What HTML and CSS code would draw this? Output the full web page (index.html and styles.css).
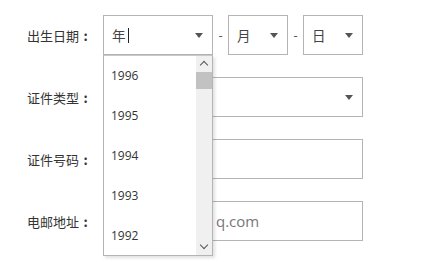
FILE: index.html
```html
<!DOCTYPE html>
<html lang="zh">
<head>
<meta charset="utf-8">
<link rel="stylesheet" href="styles.css">
</head>
<body>
<form class="form">
  <div class="row">
    <label class="label">出生日期<span class="colon">:</span></label>
    <div class="date">
      <div class="select year">
        <span class="value">年<span class="caret"></span></span>
        <span class="arrow"></span>
        <div class="dropdown">
          <ul class="options">
            <li>1996</li>
            <li>1995</li>
            <li>1994</li>
            <li>1993</li>
            <li>1992</li>
          </ul>
          <div class="scrollbar">
            <span class="chev up"></span>
            <span class="thumb"></span>
            <span class="chev down"></span>
          </div>
        </div>
      </div>
      <span class="dash">-</span>
      <div class="select small"><span class="value">月</span><span class="arrow"></span></div>
      <span class="dash">-</span>
      <div class="select small"><span class="value">日</span><span class="arrow"></span></div>
    </div>
  </div>
  <div class="row">
    <label class="label">证件类型<span class="colon">:</span></label>
    <div class="select wide"><span class="value"></span><span class="arrow"></span></div>
  </div>
  <div class="row">
    <label class="label">证件号码<span class="colon">:</span></label>
    <div class="input wide"></div>
  </div>
  <div class="row">
    <label class="label">电邮地址<span class="colon">:</span></label>
    <div class="input wide email"><span class="placeholder">q.com</span></div>
  </div>
</form>
</body>
</html>
```
FILE: styles.css
```css
html, body {
  margin: 0;
  padding: 0;
  background: #fff;
}
body {
  width: 422px;
  height: 262px;
  overflow: hidden;
  font-family: "Open Sans", "Noto Sans CJK SC", sans-serif;
  color: #333;
}
.form {
  display: flex;
  flex-direction: column;
  gap: 22px;
  padding: 15px 0 0 27px;
}
.row {
  display: flex;
  align-items: center;
  height: 40px;
}
.label {
  width: 76px;
  font-size: 13px;
  color: #333;
  font-family: "Noto Sans CJK SC", sans-serif;
  display: flex;
  align-items: center;
}
.colon {
  display: inline-block;
  width: 13px;
  text-align: center;
  font-weight: bold;
}
.date {
  display: flex;
  align-items: center;
}
.select, .input {
  position: relative;
  box-sizing: border-box;
  height: 40px;
  border: 1px solid #b4b4b4;
  background: #fff;
  display: flex;
  align-items: center;
  padding-left: 8px;
}
.year { width: 110px; }
.small { width: 60px; }
.wide { width: 260px; }
.value {
  font-family: "Noto Sans CJK SC", sans-serif;
  font-size: 13.5px;
  color: #444;
  display: flex;
  align-items: center;
}
.caret {
  display: inline-block;
  width: 1px;
  height: 15px;
  background: #222;
  margin-left: 2px;
}
.arrow {
  position: absolute;
  right: 9px;
  top: 17px;
  width: 0;
  height: 0;
  border-left: 4px solid transparent;
  border-right: 4px solid transparent;
  border-top: 5px solid #555;
}
.dash {
  width: 15px;
  text-align: center;
  font-size: 13px;
  color: #555;
}
.dropdown {
  position: absolute;
  left: -1px;
  top: 39px;
  width: 110px;
  height: 201px;
  box-sizing: border-box;
  background: #fff;
  border: 1px solid #b4b4b4;
  border-top-color: #c8c8c8;
  box-shadow: 2px 2px 3px rgba(0,0,0,0.12);
  z-index: 5;
  display: flex;
}
.options {
  list-style: none;
  margin: 0;
  padding: 0;
  flex: 1;
}
.options li {
  height: 40px;
  line-height: 40px;
  padding-left: 7px;
  font-size: 12px;
  color: #333;
}
.scrollbar {
  position: relative;
  width: 16px;
  background: #f0f0f0;
}
.thumb {
  position: absolute;
  left: 0;
  top: 16px;
  width: 16px;
  height: 17px;
  background: #c2c2c2;
}
.chev {
  position: absolute;
  left: 5px;
  width: 5px;
  height: 5px;
  border-left: 1.5px solid #555;
  border-top: 1.5px solid #555;
}
.chev.up {
  top: 6px;
  transform: rotate(45deg);
}
.chev.down {
  bottom: 7px;
  transform: rotate(225deg);
}
.email {
  padding-left: 112px;
}
.placeholder {
  font-size: 15px;
  color: #777;
  white-space: nowrap;
}
```
